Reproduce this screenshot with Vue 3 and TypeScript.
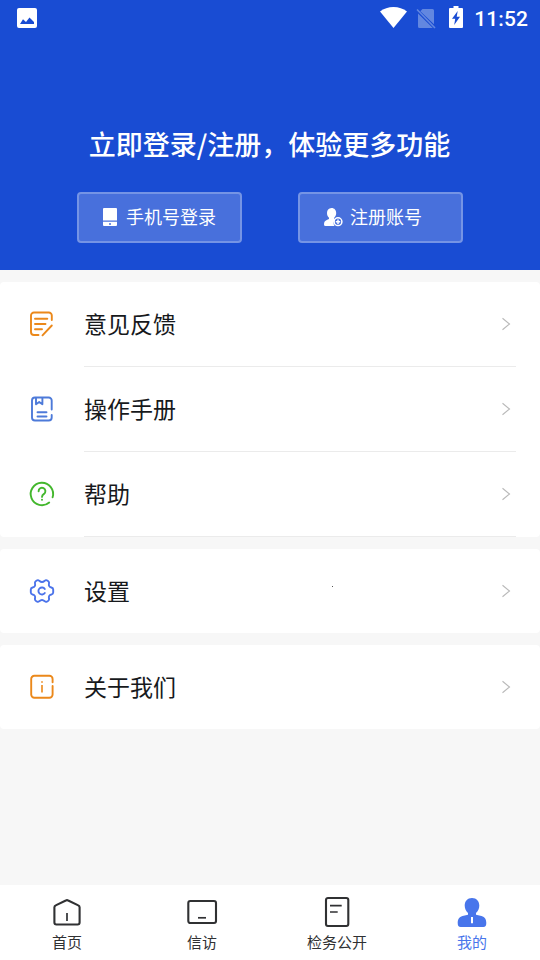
<script setup lang="ts">
interface MenuItem {
  id: string
  label: string
}

interface Tab {
  id: string
  label: string
}

const groups: MenuItem[][] = [
  [
    { id: 'feedback', label: '意见反馈' },
    { id: 'manual', label: '操作手册' },
    { id: 'help', label: '帮助' },
  ],
  [{ id: 'settings', label: '设置' }],
  [{ id: 'about', label: '关于我们' }],
]

const tabs: Tab[] = [
  { id: 'home', label: '首页' },
  { id: 'petition', label: '信访' },
  { id: 'public', label: '检务公开' },
  { id: 'mine', label: '我的' },
]

const activeTab = 'mine'
</script>

<template>
  <div class="screen">
    <header class="hero">
      <div class="status">
        <svg class="picture" width="20" height="20" viewBox="0 0 20 20">
          <path fill="#fff" fill-rule="evenodd" d="M2 0h16a2 2 0 0 1 2 2v16a2 2 0 0 1-2 2H2a2 2 0 0 1-2-2V2a2 2 0 0 1 2-2zM3 16h14v-2l-4.500-4.500-3.500 4.500-3-2.800z" />
        </svg>
        <div class="indicators">
          <svg class="wifi" width="27" height="21" viewBox="0 0 27 21">
            <path fill="#fff" d="M13.500 21 0 4.600C3.800 1.600 8.300 0 13.500 0S23.200 1.600 27 4.600z" />
          </svg>
          <svg class="sim" width="20" height="21" viewBox="0 0 20 21">
            <path fill="#6287e0" d="M6.500 1H16.500a1.500 1.500 0 0 1 1.500 1.500V16.200L4.300 3.200zM2 5.500 16.800 20H3.500A1.500 1.500 0 0 1 2 18.500z" />
            <path d="M1 1.500 19 20" stroke="#6287e0" stroke-width="1.600" />
          </svg>
          <svg class="battery" width="14" height="22" viewBox="0 0 14 22">
            <path fill="#fff" fill-rule="evenodd" d="M4.500 0h5v2H13a1 1 0 0 1 1 1v18a1 1 0 0 1-1 1H1a1 1 0 0 1-1-1V3a1 1 0 0 1 1-1h3.500zM8.700 5 3 12.700h3.200L5.200 19 11 10.700H7.700z" />
          </svg>
          <span class="time">11:52</span>
        </div>
      </div>
      <h1 class="title">立即登录/注册，体验更多功能</h1>
      <div class="actions">
        <button class="action" type="button">
          <svg width="14" height="19" viewBox="0 0 14 19">
            <path fill="#fff" d="M1 0h12a1 1 0 0 1 1 1v11.500H0V1a1 1 0 0 1 1-1z" />
            <path fill="#fff" fill-rule="evenodd" d="M0 13.800h14V17a1 1 0 0 1-1 1H1a1 1 0 0 1-1-1zM6 15.200v1.500h2v-1.500z" />
          </svg>
          <span>手机号登录</span>
        </button>
        <button class="action register" type="button">
          <svg width="19" height="19" viewBox="0 0 19 19">
            <path fill="#fff" d="M7.500 0c3 0 4.700 2.200 4.700 5 0 2-.8 3.600-2 4.700v1.200l1.300.6A5 5 0 0 0 10.500 18H1.500A1.500 1.500 0 0 1 0 16.500c0-2.500 1-3.600 2.800-4.400L5 11V9.700C3.700 8.600 3 7 3 5c0-2.800 1.600-5 4.500-5z" />
            <circle cx="14" cy="13.700" r="3.900" fill="none" stroke="#fff" stroke-width="1.500" />
            <path d="M14 11.500v4.400M11.800 13.700h4.400" stroke="#fff" stroke-width="1.500" />
          </svg>
          <span>注册账号</span>
        </button>
      </div>
    </header>

    <main class="menu">
      <section v-for="(group, index) in groups" :key="index" class="group">
        <a v-for="item in group" :key="item.id" class="row" :class="item.id">
          <svg class="row-icon" width="28" height="28" viewBox="0 0 28 28">
            <g v-if="item.id === 'feedback'">
              <path d="M23.800 10V5.500a3 3 0 0 0-3-3H6a3 3 0 0 0-3 3V22a3 3 0 0 0 3 3h4.500M14.500 25.300 23.800 15.500M7 8.700h12.300M7 14h10.500M7 19.300h7" />
            </g>
            <g v-else-if="item.id === 'manual'">
              <path d="M23.700 14.500V5.500a3 3 0 0 0-3-3H7a3 3 0 0 0-3 3v17a3 3 0 0 0 3 3h13.700a3 3 0 0 0 3-3V20M8 2.500v6.800l3.200-2.400 3.200 2.400V2.500M9.500 17.200h9M9.500 21.500h9" />
            </g>
            <g v-else-if="item.id === 'help'">
              <path d="M24.600 17.300A11.200 11.200 0 1 0 21.200 22.500M10.600 11.200a3.400 3.400 0 1 1 5.400 2.700c-1.300.9-2 1.400-2 3" />
              <circle class="dot" cx="14" cy="19.700" r="1" />
            </g>
            <g v-else-if="item.id === 'settings'">
              <path d="M9.200 3.300Q10.300 2.800 11.300 3.800Q14 6.300 16.700 3.800Q17.700 2.800 18.800 3.300L20.300 4.200Q21.400 5 21 6.400Q20.200 9.800 23.400 10.500Q25.200 11 25.200 12.500V15.500Q25.200 17 23.400 17.500Q20.200 18.200 21 21.600Q21.400 23 20.300 23.800L18.800 24.700Q17.700 25.200 16.700 24.200Q14 21.700 11.300 24.200Q10.300 25.200 9.200 24.700L7.700 23.800Q6.600 23 7 21.600Q7.800 18.200 4.600 17.500Q2.800 17 2.800 15.500V12.500Q2.800 11 4.600 10.500Q7.800 9.800 7 6.400Q6.600 5 7.700 4.200ZM16.800 12A3.500 3.500 0 1 0 16.800 16" />
            </g>
            <g v-else>
              <path d="M24.600 9.300V6a3.200 3.200 0 0 0-3.200-3.200H6.400A3.200 3.200 0 0 0 3.200 6v15.500a3.200 3.200 0 0 0 3.200 3.200h15a3.200 3.200 0 0 0 3.200-3.200V13" />
              <path class="thin" d="M14 12v7.500M14 8.200v1.600" />
            </g>
          </svg>
          <span class="label">{{ item.label }}</span>
          <svg class="chevron" width="10" height="14" viewBox="0 0 10 14">
            <path d="M1.500 1.300 8.500 7 1.500 12.700" />
          </svg>
        </a>
      </section>
    </main>

    <nav class="tabs">
      <a v-for="tab in tabs" :key="tab.id" class="tab" :class="{ active: tab.id === activeTab }">
        <svg width="36" height="36" viewBox="0 0 36 36">
          <g v-if="tab.id === 'home'">
            <path d="M16.800 6.500a2.500 2.500 0 0 1 2.400 0L29.300 11.400a2 2 0 0 1 1.300 1.800V28.500a2 2 0 0 1-2 2H7.400a2 2 0 0 1-2-2V13.200a2 2 0 0 1 1.300-1.800z" />
            <path class="detail" d="M18 19v8" />
          </g>
          <g v-else-if="tab.id === 'petition'">
            <rect x="4.300" y="7" width="27.700" height="22" rx="2" />
            <path class="detail" d="M14 23.800h8" />
          </g>
          <g v-else-if="tab.id === 'public'">
            <rect x="7" y="4" width="22.300" height="28" rx="2" />
            <path class="detail" d="M11 11.700h11.700M11 18h7.700" />
          </g>
          <g v-else class="solid">
            <path fill-rule="evenodd" d="M18 4c4.600 0 7.300 3.300 7.300 7.500 0 3.200-1.300 5.800-3.300 7.500v1.700l5.500 1.300c3.500.9 4.800 3.500 4.800 7 0 2.400-.8 4-3 4H6.700c-2.200 0-3-1.600-3-4 0-3.500 1.300-6.100 4.800-7l5.500-1.300V19c-2-1.700-3.300-4.300-3.300-7.500C10.700 7.300 13.400 4 18 4zM17 23v6.200h2V23z" />
          </g>
        </svg>
        <span>{{ tab.label }}</span>
      </a>
    </nav>
  </div>
</template>

<style>
body {
  margin: 0;
}
</style>

<style scoped>
.screen {
  display: flex;
  flex-direction: column;
  box-sizing: border-box;
  width: 540px;
  height: 960px;
  overflow: hidden;
  background: #f7f7f7;
  font-family: "Noto Sans CJK SC", sans-serif;
}

.hero {
  flex: none;
  height: 270px;
  background: #194cd3;
  color: #fff;
}

.status {
  display: flex;
  align-items: center;
  justify-content: space-between;
  height: 36px;
  padding: 0 12px 0 17px;
}

.indicators {
  display: flex;
  align-items: center;
}

.wifi {
  margin-top: -2px;
}

.sim {
  margin-left: 9px;
}

.battery {
  margin: -2px 11px 0 13px;
}

.time {
  padding-top: 1px;
  font: 500 21px/36px Roboto, sans-serif;
  letter-spacing: 0.1px;
}

.title {
  margin: 88px 0 0;
  padding-right: 1px;
  font-size: 27px;
  font-weight: 500;
  line-height: 40px;
  text-align: center;
  white-space: nowrap;
}

.actions {
  display: flex;
  justify-content: center;
  gap: 56px;
  margin-top: 28px;
}

.action {
  display: flex;
  align-items: center;
  gap: 9px;
  box-sizing: border-box;
  width: 165px;
  height: 51px;
  padding: 0 0 0 24px;
  border: 2px solid #7594e5;
  border-radius: 4px;
  background: #4870dc;
  color: #fff;
  font-family: inherit;
  font-size: 18px;
  line-height: 26px;
  white-space: nowrap;
}

.action span {
  padding-bottom: 3px;
}

.register {
  gap: 7px;
}

.menu {
  display: flex;
  flex: 1;
  flex-direction: column;
  gap: 12px;
  padding-top: 12px;
}

.group {
  border-radius: 4px;
  background: #fff;
}

.row {
  display: flex;
  align-items: center;
  position: relative;
  box-sizing: border-box;
  height: 84px;
  padding: 0 28px;
  color: #17191c;
}

.group:first-child .row {
  height: 85px;
  padding-bottom: 1px;
}

.group:first-child .row::before {
  content: "";
  position: absolute;
  right: 24px;
  bottom: 0;
  left: 84px;
  height: 1px;
  background: #ebebeb;
}

.settings::after {
  content: "";
  position: absolute;
  top: 37px;
  left: 332px;
  width: 1px;
  height: 1px;
  background: #555;
}

.row-icon {
  flex: none;
  fill: none;
  stroke: currentColor;
  stroke-width: 1.9;
  stroke-linecap: round;
  stroke-linejoin: round;
}

.feedback .row-icon,
.about .row-icon {
  color: #eb881a;
}

.manual .row-icon {
  color: #4d7ad9;
}

.help .row-icon {
  color: #43b72d;
}

.settings .row-icon {
  color: #4b73ea;
}

.dot {
  fill: currentColor;
  stroke: none;
}

.thin {
  stroke-width: 1.6;
  stroke-linecap: butt;
}

.label {
  flex: 1;
  margin-left: 28px;
  padding-bottom: 2px;
  font-size: 23px;
  line-height: 34px;
}

.chevron {
  margin-right: 1px;
  fill: none;
  stroke: #b9b9b9;
  stroke-width: 1.1;
}

.tabs {
  display: flex;
  flex: none;
  height: 75px;
  background: #fff;
}

.tab {
  display: flex;
  flex: 1;
  flex-direction: column;
  align-items: center;
  padding: 9px 1px 0 0;
  color: #303133;
  font-size: 15px;
  line-height: 22px;
}

.tab svg {
  margin-bottom: 1px;
  fill: none;
  stroke: currentColor;
  stroke-width: 2.1;
  stroke-linejoin: round;
}

.tab .detail {
  stroke-width: 1.7;
}

.tab .solid {
  fill: currentColor;
  stroke: none;
}

.tab.active {
  color: #4875eb;
}
</style>
